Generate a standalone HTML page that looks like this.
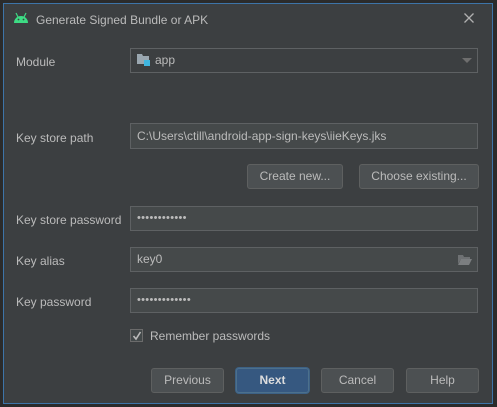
<!DOCTYPE html>
<html><head><style>
body{margin:0;width:497px;height:407px;background:#2b2b2b;position:relative;overflow:hidden;font-family:"Liberation Sans",sans-serif;font-size:12px;color:#bbbbbb}
.win{position:absolute;left:3px;top:3px;width:488px;height:399px;background:#3c3f41;border:1px solid #3d74a8}
.a{position:absolute}
.lbl{position:absolute;left:16px}
.fld{position:absolute;left:130px;width:346px;height:24px;background:#45494a;border:1px solid #5e6163;box-sizing:border-box;line-height:22px;padding-left:6px;color:#bbb}
.btn{position:absolute;height:25px;background:#4c5052;border:1px solid #5e6060;border-radius:3px;box-sizing:border-box;text-align:center;line-height:23px;color:#bbb}
.dots{letter-spacing:0.3px;font-size:11px}
</style></head><body>
<div class="win"></div>
<svg class="a" style="left:12px;top:12px" width="18" height="12" viewBox="0 0 18 12"><path d="M2 11 A7 7 0 0 1 16 11 Z" fill="#3ddc84"/><line x1="4" y1="1" x2="6" y2="5" stroke="#3ddc84" stroke-width="1.2"/><line x1="14" y1="1" x2="12" y2="5" stroke="#3ddc84" stroke-width="1.2"/><circle cx="6.5" cy="7.5" r="0.9" fill="#3c3f41"/><circle cx="11.5" cy="7.5" r="0.9" fill="#3c3f41"/></svg>
<div class="a" style="left:36px;top:13px">Generate Signed Bundle or APK</div>
<svg class="a" style="left:464px;top:13px" width="10" height="10"><path d="M0.5 0.5L9.5 9.5M9.5 0.5L0.5 9.5" stroke="#b0b0b0" stroke-width="1.3"/></svg>
<div class="lbl" style="top:55px">Module</div>
<div class="fld" style="top:48px;height:25px;width:348px;background:#3c3f41;line-height:23px;padding-left:24px">app</div>
<svg class="a" style="left:137px;top:53px" width="14" height="14"><path d="M0 1h5l1 2h6v8H0z" fill="#9aa7b0"/><rect x="7" y="7" width="6" height="6" fill="#40b6e0"/></svg>
<div class="a" style="left:462px;top:58px;width:0;height:0;border-left:5px solid transparent;border-right:5px solid transparent;border-top:5px solid #6e6e6e"></div>
<div class="lbl" style="top:131px">Key store path</div>
<div class="fld" style="top:123px;height:26px;width:348px;line-height:24px">C:\Users\ctill\android-app-sign-keys\iieKeys.jks</div>
<div class="btn" style="left:247px;top:164px;width:96px">Create new...</div>
<div class="btn" style="left:359px;top:164px;width:120px">Choose existing...</div>
<div class="lbl" style="top:213px">Key store password</div>
<div class="fld dots" style="top:206px;height:25px;width:348px;line-height:23px">••••••••••••</div>
<div class="lbl" style="top:254px">Key alias</div>
<div class="fld" style="top:247px;height:25px;width:348px;line-height:23px">key0</div>
<svg class="a" style="left:458px;top:254px" width="14" height="11"><path d="M0 1h5l1 2h6v2H3L0 10z" fill="#6e7173"/><path d="M3 5h11l-3 6H0z" fill="#7b7e80"/></svg>
<div class="lbl" style="top:295px">Key password</div>
<div class="fld dots" style="top:288px;height:25px;width:348px;line-height:23px">•••••••••••••</div>
<div class="a" style="left:130px;top:329px;width:13px;height:13px;border:1px solid #6b6b6b;background:#43494a;box-sizing:border-box"></div>
<svg class="a" style="left:131px;top:330px" width="12" height="12"><path d="M2.5 6 L5 9 L9.5 2" fill="none" stroke="#bbb" stroke-width="1.6"/></svg>
<div class="a" style="left:150px;top:329px">Remember passwords</div>
<div class="btn" style="left:151px;top:368px;width:73px">Previous</div>
<div class="btn" style="left:236px;top:368px;width:73px;background:#365880;border-color:#4c708c;box-shadow:0 0 0 1px #3d6185;color:#ddd;font-weight:bold">Next</div>
<div class="btn" style="left:321px;top:368px;width:73px">Cancel</div>
<div class="btn" style="left:406px;top:368px;width:73px">Help</div>
</body></html>
